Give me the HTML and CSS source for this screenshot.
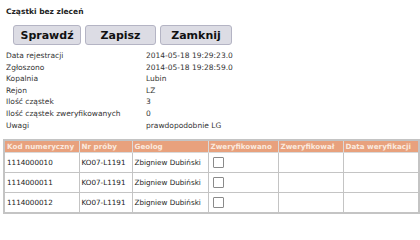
FILE: index.html
```html
<!DOCTYPE html>
<html lang="pl">
<head>
<meta charset="utf-8">
<title>Cząstki bez zleceń</title>
<link rel="stylesheet" href="styles.css">
</head>
<body>
<div class="page">
  <h1 class="title">Cząstki bez zleceń</h1>
  <div class="buttons">
    <button class="btn btn-check">Sprawdź</button>
    <button class="btn btn-save">Zapisz</button>
    <button class="btn btn-close">Zamknij</button>
  </div>
  <div class="info">
    <div class="label">Data rejestracji</div><div class="value">2014-05-18 19:29:23.0</div>
    <div class="label">Zgłoszono</div><div class="value">2014-05-18 19:28:59.0</div>
    <div class="label">Kopalnia</div><div class="value">Lubin</div>
    <div class="label">Rejon</div><div class="value">LZ</div>
    <div class="label">Ilość cząstek</div><div class="value">3</div>
    <div class="label">Ilość cząstek zweryfikowanych</div><div class="value">0</div>
    <div class="label">Uwagi</div><div class="value">prawdopodobnie LG</div>
  </div>
  <table class="grid">
    <colgroup>
      <col class="c1"><col class="c2"><col class="c3"><col class="c4"><col class="c5"><col class="c6">
    </colgroup>
    <thead>
      <tr>
        <th>Kod numeryczny</th><th>Nr próby</th><th>Geolog</th><th>Zweryfikowano</th><th>Zweryfikował</th><th>Data weryfikacji</th>
      </tr>
    </thead>
    <tbody>
      <tr><td>1114000010</td><td>KO07-L1191</td><td>Zbigniew Dubiński</td><td><span class="box"></span></td><td></td><td></td></tr>
      <tr><td>1114000011</td><td>KO07-L1191</td><td>Zbigniew Dubiński</td><td><span class="box"></span></td><td></td><td></td></tr>
      <tr><td>1114000012</td><td>KO07-L1191</td><td>Zbigniew Dubiński</td><td><span class="box"></span></td><td></td><td></td></tr>
    </tbody>
  </table>
</div>
</body>
</html>
```
FILE: styles.css
```css
html, body {
  margin: 0;
  padding: 0;
  background: #ffffff;
}
body {
  font-family: "DejaVu Sans", Verdana, sans-serif;
  color: #1a1a1a;
}
.page {
  width: 420px;
  height: 215px;
  overflow: hidden;
}
.title {
  margin: 0;
  padding: 7px 0 0 6px;
  font-size: 7.5px;
  line-height: 10px;
  font-weight: bold;
  color: #222;
}
.buttons {
  display: flex;
  gap: 4px;
  margin: 8px 0 0 13px;
}
.btn {
  height: 20px;
  padding: 0;
  border: 1px solid #b4b4c4;
  border-radius: 3px;
  background: #dcdce4;
  font-family: "DejaVu Sans", Verdana, sans-serif;
  font-weight: bold;
  font-size: 11px;
  color: #111;
}
.btn-check { width: 68px; }
.btn-save { width: 71px; }
.btn-close { width: 72px; }
.info {
  display: grid;
  grid-template-columns: 140px auto;
  margin: 5px 0 0 6px;
  font-size: 7.5px;
  line-height: 11.6px;
  color: #333;
}
.grid {
  margin: 8px 0 0 3px;
  width: 415px;
  border-collapse: collapse;
  table-layout: fixed;
  border: 2px solid #c4c4c4;
  font-size: 7.2px;
}
.c1 { width: 75px; }
.c2 { width: 53px; }
.c3 { width: 76px; }
.c4 { width: 70px; }
.c5 { width: 65px; }
.c6 { width: 76px; }
.grid th {
  height: 11px;
  padding: 0 2px;
  background: #e8a17d;
  color: #fbe9dd;
  font-weight: bold;
  text-align: left;
  white-space: nowrap;
  overflow: hidden;
  border: 1px solid #d9d9d9;
}
.grid td {
  height: 19px;
  padding: 0 2px;
  border: 1px solid #c4c4c4;
  color: #1a1a1a;
  white-space: nowrap;
  vertical-align: middle;
}
.box {
  display: block;
  width: 9px;
  height: 9px;
  margin-left: 2px;
  border: 1px solid #8a8a8a;
  border-radius: 1px;
  background: #fff;
}
```
